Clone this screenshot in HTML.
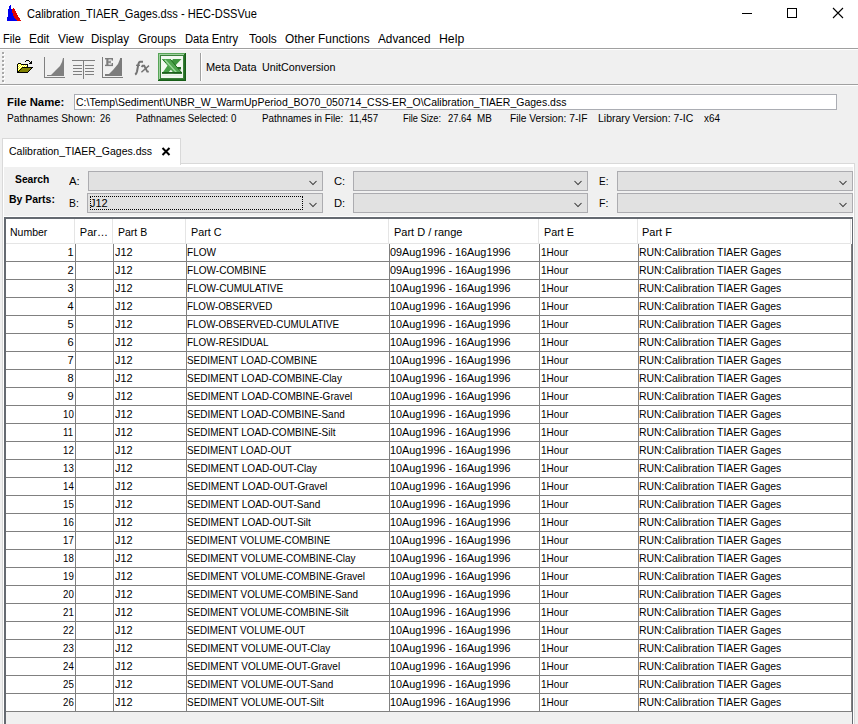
<!DOCTYPE html>
<html><head><meta charset="utf-8">
<style>
html,body{margin:0;padding:0}
body{width:858px;height:724px;overflow:hidden;position:relative;background:#f0f0f0;font-family:"Liberation Sans",sans-serif;color:#000}
.a{position:absolute}
.t{position:absolute;white-space:nowrap;line-height:20px;height:20px;transform-origin:0 0}
.cb{position:absolute;background:#e1e1e1;border:1px solid #acacb0;box-sizing:border-box}
.chev{position:absolute;width:10px;height:6px}
.vl{position:absolute;top:244px;height:468px;width:1px;background:#808080}
.hs{position:absolute;top:219px;height:24px;width:1px;background:#e5e5e5}
.hl{position:absolute;left:6px;width:846px;height:1px;background:#808080}
</style></head><body>
<!-- title + menu -->
<div class="a" style="left:0;top:0;width:858px;height:48px;background:#fff"></div>
<div class="a" style="left:0;top:48px;width:858px;height:1px;background:#a0a0a0"></div>
<div class="a" style="left:0;top:49px;width:858px;height:1px;background:#fff"></div>
<svg class="a" style="left:0;top:0" width="30" height="30" shape-rendering="crispEdges">
  <polygon points="13,8 14,8 15,10 16,12 17,14 18,16 20,19 21,21 12,21 12,10" fill="#e00000"/>
  <polygon points="10,5 11,5 11,8 12,10 12.5,13 13.5,16 15,19 17,21 7,21 7.5,17 8,12 9,6" fill="#0000f0"/>
</svg>
<svg class="a" style="left:730px;top:0" width="128" height="30">
  <rect x="12" y="13" width="10" height="1" fill="#000"/>
  <rect x="57.5" y="8.5" width="9" height="9" fill="none" stroke="#000" stroke-width="1"/>
  <path d="M103,8 L113,18 M113,8 L103,18" stroke="#000" stroke-width="1.1"/>
</svg>
<!-- toolbar -->
<div class="a" style="left:0;top:84px;width:858px;height:1px;background:#a0a0a0"></div>
<div class="a" style="left:0;top:85px;width:858px;height:1px;background:#fff"></div>
<svg class="a" style="left:0;top:50px" width="6" height="34" shape-rendering="crispEdges">
  <g fill="#fff">
  <rect x="3" y="3" width="2" height="2"/><rect x="3" y="7" width="2" height="2"/><rect x="3" y="11" width="2" height="2"/><rect x="3" y="15" width="2" height="2"/>
  <rect x="3" y="19" width="2" height="2"/><rect x="3" y="23" width="2" height="2"/><rect x="3" y="27" width="2" height="2"/><rect x="3" y="31" width="2" height="2"/>
  </g>
  <g fill="#a8a8a8">
  <rect x="2" y="2" width="2" height="2"/><rect x="2" y="6" width="2" height="2"/><rect x="2" y="10" width="2" height="2"/><rect x="2" y="14" width="2" height="2"/>
  <rect x="2" y="18" width="2" height="2"/><rect x="2" y="22" width="2" height="2"/><rect x="2" y="26" width="2" height="2"/><rect x="2" y="30" width="2" height="2"/>
  </g>
</svg>
<!-- folder icon -->
<svg class="a" style="left:0;top:50px" width="40" height="34" shape-rendering="crispEdges">
  <g transform="translate(0,-50)">
  <rect x="22" y="68" width="9" height="1" fill="#808000"/>
  <rect x="21" y="69" width="9" height="1" fill="#808000"/>
  <rect x="20" y="70" width="9" height="1" fill="#808000"/>
  <rect x="19" y="71" width="9" height="1" fill="#808000"/>
  <rect x="18" y="64" width="1" height="1" fill="#ffff00"/>
  <rect x="19" y="64" width="1" height="1" fill="#ffffff"/>
  <rect x="20" y="64" width="1" height="1" fill="#ffff00"/>
  <rect x="18" y="65" width="1" height="1" fill="#ffffff"/>
  <rect x="19" y="65" width="1" height="1" fill="#ffff00"/>
  <rect x="20" y="65" width="1" height="1" fill="#ffffff"/>
  <rect x="21" y="65" width="1" height="1" fill="#ffff00"/>
  <rect x="22" y="65" width="1" height="1" fill="#ffffff"/>
  <rect x="23" y="65" width="1" height="1" fill="#ffff00"/>
  <rect x="24" y="65" width="1" height="1" fill="#ffffff"/>
  <rect x="25" y="65" width="1" height="1" fill="#ffff00"/>
  <rect x="26" y="65" width="1" height="1" fill="#ffffff"/>
  <rect x="18" y="66" width="1" height="1" fill="#ffff00"/>
  <rect x="19" y="66" width="1" height="1" fill="#ffffff"/>
  <rect x="20" y="66" width="1" height="1" fill="#ffff00"/>
  <rect x="21" y="66" width="1" height="1" fill="#ffffff"/>
  <rect x="22" y="66" width="1" height="1" fill="#ffff00"/>
  <rect x="23" y="66" width="1" height="1" fill="#ffffff"/>
  <rect x="24" y="66" width="1" height="1" fill="#ffff00"/>
  <rect x="25" y="66" width="1" height="1" fill="#ffffff"/>
  <rect x="26" y="66" width="1" height="1" fill="#ffff00"/>
  <rect x="18" y="67" width="1" height="1" fill="#ffffff"/>
  <rect x="19" y="67" width="1" height="1" fill="#ffff00"/>
  <rect x="20" y="67" width="1" height="1" fill="#ffffff"/>
  <rect x="21" y="67" width="1" height="1" fill="#ffff00"/>
  <rect x="18" y="68" width="1" height="1" fill="#ffff00"/>
  <rect x="19" y="68" width="1" height="1" fill="#ffffff"/>
  <rect x="20" y="68" width="1" height="1" fill="#ffff00"/>
  <rect x="18" y="69" width="1" height="1" fill="#ffffff"/>
  <rect x="19" y="69" width="1" height="1" fill="#ffff00"/>
  <rect x="18" y="70" width="1" height="1" fill="#ffff00"/>
  <rect x="26" y="60" width="3" height="1" fill="#000"/>
  <rect x="25" y="61" width="1" height="1" fill="#000"/>
  <rect x="29" y="61" width="1" height="1" fill="#000"/>
  <rect x="31" y="61" width="1" height="1" fill="#000"/>
  <rect x="30" y="62" width="2" height="1" fill="#000"/>
  <rect x="18" y="63" width="3" height="1" fill="#000"/>
  <rect x="29" y="63" width="3" height="1" fill="#000"/>
  <rect x="17" y="64" width="1" height="1" fill="#000"/>
  <rect x="21" y="64" width="7" height="1" fill="#000"/>
  <rect x="17" y="65" width="1" height="1" fill="#000"/>
  <rect x="27" y="65" width="1" height="1" fill="#000"/>
  <rect x="17" y="66" width="1" height="1" fill="#000"/>
  <rect x="27" y="66" width="1" height="1" fill="#000"/>
  <rect x="17" y="67" width="1" height="1" fill="#000"/>
  <rect x="22" y="67" width="11" height="1" fill="#000"/>
  <rect x="17" y="68" width="1" height="1" fill="#000"/>
  <rect x="21" y="68" width="1" height="1" fill="#000"/>
  <rect x="31" y="68" width="1" height="1" fill="#000"/>
  <rect x="17" y="69" width="1" height="1" fill="#000"/>
  <rect x="20" y="69" width="1" height="1" fill="#000"/>
  <rect x="30" y="69" width="1" height="1" fill="#000"/>
  <rect x="17" y="70" width="1" height="1" fill="#000"/>
  <rect x="19" y="70" width="1" height="1" fill="#000"/>
  <rect x="29" y="70" width="1" height="1" fill="#000"/>
  <rect x="17" y="71" width="2" height="1" fill="#000"/>
  <rect x="28" y="71" width="1" height="1" fill="#000"/>
  <rect x="17" y="72" width="11" height="1" fill="#000"/>
  </g>
</svg>
<!-- chart icon -->
<svg class="a" style="left:40px;top:50px" width="30" height="34">
  <g transform="translate(-40,-50)">
  <rect x="44" y="57" width="1" height="21" fill="#808080"/>
  <rect x="44" y="77" width="21" height="1" fill="#808080"/>
  <polygon points="47,75 51,75 56,70 60,66 62,62 63,58 64,58 64,76 47,76" fill="#808080"/>
  </g>
</svg>
<!-- list icon -->
<svg class="a" style="left:70px;top:50px" width="30" height="34" shape-rendering="crispEdges">
  <g transform="translate(-70,-50)" fill="#808080">
  <rect x="72" y="60" width="23" height="1"/>
  <rect x="83" y="60" width="1" height="19"/>
  <rect x="73" y="65" width="9" height="1"/><rect x="85" y="65" width="9" height="1"/>
  <rect x="73" y="68" width="9" height="1"/><rect x="85" y="68" width="9" height="1"/>
  <rect x="73" y="71" width="9" height="1"/><rect x="85" y="71" width="9" height="1"/>
  <rect x="73" y="74" width="9" height="1"/><rect x="85" y="74" width="9" height="1"/>
  </g>
</svg>
<!-- E chart icon -->
<svg class="a" style="left:100px;top:50px" width="30" height="34">
  <g transform="translate(-100,-50)" fill="#7c7c7c">
  <rect x="102" y="57" width="1" height="21"/>
  <rect x="102" y="77" width="21" height="1"/>
  <polygon points="105,74 109,74 113,70 118,64 120,59 120,58 122,58 122,76 105,76"/>
  <rect x="105" y="58" width="8" height="1.4"/>
  <rect x="111.6" y="58" width="1.4" height="2.6"/>
  <rect x="106.3" y="58" width="2.2" height="8"/>
  <rect x="107" y="61.4" width="3.2" height="1.3"/>
  <rect x="109.6" y="60.6" width="1.1" height="2.8"/>
  <rect x="105" y="64.7" width="8" height="1.4"/>
  <rect x="111.6" y="63" width="1.4" height="3"/>
  </g>
</svg>
<!-- fx icon -->
<svg class="a" style="left:130px;top:50px" width="26" height="34">
  <g transform="translate(-130,-50)" stroke="#737373" fill="none">
  <path d="M143,61.8 L140,61.8 Q138.8,62.2 138.4,64 L137,71.5 Q136.5,73.6 135.2,74.6" stroke-width="2"/>
  <path d="M136,65.3 L140,65.3" stroke-width="1.3"/>
  <path d="M141.6,67 L142.6,65.8 L144.2,65.8 L147.3,71.6 L148.8,71.6" stroke-width="1.9"/>
  <path d="M149,65.6 L141.4,72.2" stroke-width="1.4"/>
  </g>
</svg>
<!-- excel icon -->
<svg class="a" style="left:156px;top:50px" width="34" height="34">
  <g transform="translate(-156,-50)">
  <rect x="158" y="53" width="28" height="28" fill="#165e16"/>
  <rect x="158" y="53" width="27" height="27" fill="#58a558"/>
  <rect x="159" y="54" width="26" height="26" fill="#246e24"/>
  <rect x="159" y="54" width="25" height="25" fill="#9fd09f"/>
  <rect x="160" y="55" width="24" height="24" fill="#3a7f3a"/>
  <rect x="161" y="56" width="22" height="22" fill="#f2f9f0"/>
  <rect x="162" y="75" width="20" height="1" fill="#e2efe2"/>
  <polygon points="173,59 181.5,59 174.5,66.5 170.5,63" fill="#3d963d"/>
  <polygon points="168,65 172,68.5 167.5,73.5 162,73.5" fill="#45a045"/>
  <polygon points="176,67 181,67 181,69.5 177.5,69.5" fill="#1f6f1f"/>
  <polygon points="162,59 170.5,59 182,73.5 174,73.5" fill="#4fa64f"/>
  <path d="M165,60 L176.5,72.5" stroke="#9edb9e" stroke-width="1.2"/>
  <rect x="162" y="72" width="20" height="1.8" fill="#1b5f1b"/>
  <path d="M170.5,59.5 L181.5,72.5" stroke="#1b6a1b" stroke-width="1"/>
  <path d="M162.5,59.5 L166,63" stroke="#2a7a2a" stroke-width="1"/>
  </g>
</svg>
<div class="a" style="left:200px;top:53px;width:1px;height:28px;background:#a0a0a0"></div>
<div class="a" style="left:201px;top:53px;width:1px;height:28px;background:#fff"></div>

<!-- file name box -->
<div class="a" style="left:74px;top:94px;width:763px;height:16px;background:#fff;border:1px solid #abadb3;box-sizing:border-box"></div>

<!-- tab + panel -->
<div class="a" style="left:2px;top:163px;width:853px;height:570px;background:#fff;border:1px solid #d9d9d9;box-sizing:border-box"></div>
<div class="a" style="left:2px;top:138px;width:179px;height:27px;background:#fff;border:1px solid #d9d9d9;border-bottom:none;box-sizing:border-box"></div>
<svg class="a" style="left:160px;top:146px" width="12" height="12">
  <path d="M2.5,2 L9.5,9 M9.5,2 L2.5,9" stroke="#000" stroke-width="2"/>
</svg>
<div class="a" style="left:4px;top:167px;width:849px;height:49px;background:#f0f0f0"></div>

<!-- combos -->
<div class="cb" style="left:88px;top:171px;width:235px;height:20px"></div>
<div class="cb" style="left:87px;top:193px;width:236px;height:20px"></div>
<div class="cb" style="left:353px;top:171px;width:235px;height:20px"></div>
<div class="cb" style="left:353px;top:193px;width:235px;height:20px"></div>
<div class="cb" style="left:617px;top:171px;width:236px;height:20px"></div>
<div class="cb" style="left:617px;top:193px;width:236px;height:20px"></div>
<div class="a" style="left:90px;top:196px;width:213px;height:14px;box-sizing:border-box;border:1px dotted #000"></div>
<svg class="a" style="left:0;top:0" width="858" height="220">
  <g stroke="#333" stroke-width="1.05" fill="none">
  <path d="M309.5,181 L313,184.5 L316.5,181"/>
  <path d="M309.5,203 L313,206.5 L316.5,203"/>
  <path d="M574.5,181 L578,184.5 L581.5,181"/>
  <path d="M574.5,203 L578,206.5 L581.5,203"/>
  <path d="M839.5,181 L843,184.5 L846.5,181"/>
  <path d="M839.5,203 L843,206.5 L846.5,203"/>
  </g>
</svg>

<!-- table -->
<div class="a" style="left:4px;top:217px;width:849px;height:507px;background:#656a71"></div>
<div class="a" style="left:6px;top:219px;width:846px;height:505px;background:#f0f0f0"></div>
<div class="a" style="left:6px;top:219px;width:846px;height:492px;background:#fff"></div>
<div class="a" style="left:6px;top:243px;width:845px;height:1px;background:#e5e5e5"></div>
<div class="hs" style="left:74px"></div><div class="hs" style="left:112px"></div><div class="hs" style="left:185px"></div>
<div class="hs" style="left:388px"></div><div class="hs" style="left:538px"></div><div class="hs" style="left:637px"></div><div class="hs" style="left:850px"></div>
<div class="vl" style="left:75px"></div><div class="vl" style="left:113px"></div><div class="vl" style="left:186px"></div>
<div class="vl" style="left:389px"></div><div class="vl" style="left:539px"></div><div class="vl" style="left:638px"></div><div class="vl" style="left:851px"></div>
<div class="hl" style="top:261px"></div><div class="hl" style="top:279px"></div><div class="hl" style="top:297px"></div><div class="hl" style="top:315px"></div><div class="hl" style="top:333px"></div><div class="hl" style="top:351px"></div><div class="hl" style="top:369px"></div><div class="hl" style="top:387px"></div><div class="hl" style="top:405px"></div><div class="hl" style="top:423px"></div><div class="hl" style="top:441px"></div><div class="hl" style="top:459px"></div><div class="hl" style="top:477px"></div><div class="hl" style="top:495px"></div><div class="hl" style="top:513px"></div><div class="hl" style="top:531px"></div><div class="hl" style="top:549px"></div><div class="hl" style="top:567px"></div><div class="hl" style="top:585px"></div><div class="hl" style="top:603px"></div><div class="hl" style="top:621px"></div><div class="hl" style="top:639px"></div><div class="hl" style="top:657px"></div><div class="hl" style="top:675px"></div><div class="hl" style="top:693px"></div><div class="hl" style="top:711px"></div>
<div class="t" style="top:4px;font-size:12px;left:27.00px;transform:scaleX(0.9229);">Calibration_TIAER_Gages.dss - HEC-DSSVue</div>
<div class="t" style="top:29px;font-size:12px;left:2.50px;transform:scaleX(0.9206);">File</div>
<div class="t" style="top:29px;font-size:12px;left:28.90px;transform:scaleX(0.9866);">Edit</div>
<div class="t" style="top:29px;font-size:12px;left:57.70px;transform:scaleX(0.9925);">View</div>
<div class="t" style="top:29px;font-size:12px;left:91.00px;transform:scaleX(0.9658);">Display</div>
<div class="t" style="top:29px;font-size:12px;left:138.00px;transform:scaleX(0.9657);">Groups</div>
<div class="t" style="top:29px;font-size:12px;left:185.00px;transform:scaleX(0.9367);">Data Entry</div>
<div class="t" style="top:29px;font-size:12px;left:248.50px;transform:scaleX(0.9924);">Tools</div>
<div class="t" style="top:29px;font-size:12px;left:284.90px;transform:scaleX(0.9921);">Other Functions</div>
<div class="t" style="top:29px;font-size:12px;left:377.80px;transform:scaleX(0.9836);">Advanced</div>
<div class="t" style="top:29px;font-size:12px;left:438.70px;transform:scaleX(1.0211);">Help</div>
<div class="t" style="top:57px;font-size:11px;left:205.90px;">Meta Data</div>
<div class="t" style="top:57px;font-size:11px;left:261.80px;transform:scaleX(0.9761);">UnitConversion</div>
<div class="t" style="top:92px;font-size:11px;font-weight:bold;left:7.00px;transform:scaleX(1.0300);">File Name:</div>
<div class="t" style="top:92px;font-size:11px;left:76.30px;transform:scaleX(0.9534);">C:\Temp\Sediment\UNBR_W_WarmUpPeriod_BO70_050714_CSS-ER_O\Calibration_TIAER_Gages.dss</div>
<div class="t" style="top:109px;font-size:10px;left:6.80px;transform:scaleX(1.0171);">Pathnames Shown:</div>
<div class="t" style="top:109px;font-size:10px;left:100.00px;transform:scaleX(0.9260);">26</div>
<div class="t" style="top:109px;font-size:10px;left:135.90px;transform:scaleX(0.9710);">Pathnames Selected: 0</div>
<div class="t" style="top:109px;font-size:10px;left:261.70px;transform:scaleX(0.9817);">Pathnames in File:</div>
<div class="t" style="top:109px;font-size:10px;left:348.50px;transform:scaleX(0.9751);">11,457</div>
<div class="t" style="top:109px;font-size:10px;left:403.00px;transform:scaleX(0.9265);">File Size:</div>
<div class="t" style="top:109px;font-size:10px;left:447.50px;transform:scaleX(0.9351);">27.64</div>
<div class="t" style="top:109px;font-size:10px;left:476.80px;transform:scaleX(0.9867);">MB</div>
<div class="t" style="top:109px;font-size:10px;left:509.70px;transform:scaleX(1.0241);">File Version: 7-IF</div>
<div class="t" style="top:109px;font-size:10px;left:598.00px;transform:scaleX(1.0445);">Library Version: 7-IC</div>
<div class="t" style="top:109px;font-size:10px;left:703.50px;transform:scaleX(0.9862);">x64</div>
<div class="t" style="top:141px;font-size:11px;left:9.40px;transform:scaleX(0.9546);">Calibration_TIAER_Gages.dss</div>
<div class="t" style="top:169px;font-size:11px;font-weight:bold;left:14.60px;transform:scaleX(0.9376);">Search</div>
<div class="t" style="top:189px;font-size:11px;font-weight:bold;left:9.40px;transform:scaleX(0.9504);">By Parts:</div>
<div class="t" style="top:171px;font-size:11px;left:69.10px;transform:scaleX(1.0392);">A:</div>
<div class="t" style="top:193px;font-size:11px;left:69.10px;transform:scaleX(0.9429);">B:</div>
<div class="t" style="top:171px;font-size:11px;left:334.10px;transform:scaleX(1.0182);">C:</div>
<div class="t" style="top:193px;font-size:11px;left:334.10px;transform:scaleX(1.0182);">D:</div>
<div class="t" style="top:171px;font-size:11px;left:599.40px;transform:scaleX(0.9044);">E:</div>
<div class="t" style="top:193px;font-size:11px;left:599.40px;transform:scaleX(0.9616);">F:</div>
<div class="t" style="top:193px;font-size:11px;left:90.00px;">J12</div>
<div class="t" style="top:222px;font-size:11px;left:10.00px;transform:scaleX(0.9534);">Number</div>
<div class="t" style="top:222px;font-size:11px;left:79.80px;">Par…</div>
<div class="t" style="top:222px;font-size:11px;left:118.00px;transform:scaleX(0.9553);">Part B</div>
<div class="t" style="top:222px;font-size:11px;left:190.80px;transform:scaleX(0.9784);">Part C</div>
<div class="t" style="top:222px;font-size:11px;left:394.00px;">Part D / range</div>
<div class="t" style="top:222px;font-size:11px;left:543.50px;transform:scaleX(0.9815);">Part E</div>
<div class="t" style="top:222px;font-size:11px;left:642.00px;">Part F</div>
<div class="t" style="top:242px;font-size:11px;left:67.48px;">1</div>
<div class="t" style="top:242px;font-size:11px;left:114.50px;transform:scaleX(0.9924);">J12</div>
<div class="t" style="top:242px;font-size:11px;left:187.20px;transform:scaleX(0.9127);">FLOW</div>
<div class="t" style="top:242px;font-size:11px;left:390.10px;transform:scaleX(0.9850);">09Aug1996 - 16Aug1996</div>
<div class="t" style="top:242px;font-size:11px;left:541.30px;transform:scaleX(0.9112);">1Hour</div>
<div class="t" style="top:242px;font-size:11px;left:638.60px;transform:scaleX(0.9476);">RUN:Calibration TIAER Gages</div>
<div class="t" style="top:260px;font-size:11px;left:67.48px;">2</div>
<div class="t" style="top:260px;font-size:11px;left:114.50px;transform:scaleX(0.9924);">J12</div>
<div class="t" style="top:260px;font-size:11px;left:187.20px;transform:scaleX(0.9136);">FLOW-COMBINE</div>
<div class="t" style="top:260px;font-size:11px;left:390.10px;transform:scaleX(0.9850);">09Aug1996 - 16Aug1996</div>
<div class="t" style="top:260px;font-size:11px;left:541.30px;transform:scaleX(0.9112);">1Hour</div>
<div class="t" style="top:260px;font-size:11px;left:638.60px;transform:scaleX(0.9476);">RUN:Calibration TIAER Gages</div>
<div class="t" style="top:278px;font-size:11px;left:67.48px;">3</div>
<div class="t" style="top:278px;font-size:11px;left:114.50px;transform:scaleX(0.9924);">J12</div>
<div class="t" style="top:278px;font-size:11px;left:187.20px;transform:scaleX(0.9124);">FLOW-CUMULATIVE</div>
<div class="t" style="top:278px;font-size:11px;left:390.10px;transform:scaleX(0.9850);">10Aug1996 - 16Aug1996</div>
<div class="t" style="top:278px;font-size:11px;left:541.30px;transform:scaleX(0.9112);">1Hour</div>
<div class="t" style="top:278px;font-size:11px;left:638.60px;transform:scaleX(0.9476);">RUN:Calibration TIAER Gages</div>
<div class="t" style="top:296px;font-size:11px;left:67.48px;">4</div>
<div class="t" style="top:296px;font-size:11px;left:114.50px;transform:scaleX(0.9924);">J12</div>
<div class="t" style="top:296px;font-size:11px;left:187.20px;transform:scaleX(0.8859);">FLOW-OBSERVED</div>
<div class="t" style="top:296px;font-size:11px;left:390.10px;transform:scaleX(0.9850);">10Aug1996 - 16Aug1996</div>
<div class="t" style="top:296px;font-size:11px;left:541.30px;transform:scaleX(0.9112);">1Hour</div>
<div class="t" style="top:296px;font-size:11px;left:638.60px;transform:scaleX(0.9476);">RUN:Calibration TIAER Gages</div>
<div class="t" style="top:314px;font-size:11px;left:67.48px;">5</div>
<div class="t" style="top:314px;font-size:11px;left:114.50px;transform:scaleX(0.9924);">J12</div>
<div class="t" style="top:314px;font-size:11px;left:187.20px;transform:scaleX(0.8952);">FLOW-OBSERVED-CUMULATIVE</div>
<div class="t" style="top:314px;font-size:11px;left:390.10px;transform:scaleX(0.9850);">10Aug1996 - 16Aug1996</div>
<div class="t" style="top:314px;font-size:11px;left:541.30px;transform:scaleX(0.9112);">1Hour</div>
<div class="t" style="top:314px;font-size:11px;left:638.60px;transform:scaleX(0.9476);">RUN:Calibration TIAER Gages</div>
<div class="t" style="top:332px;font-size:11px;left:67.48px;">6</div>
<div class="t" style="top:332px;font-size:11px;left:114.50px;transform:scaleX(0.9924);">J12</div>
<div class="t" style="top:332px;font-size:11px;left:187.20px;transform:scaleX(0.9030);">FLOW-RESIDUAL</div>
<div class="t" style="top:332px;font-size:11px;left:390.10px;transform:scaleX(0.9850);">10Aug1996 - 16Aug1996</div>
<div class="t" style="top:332px;font-size:11px;left:541.30px;transform:scaleX(0.9112);">1Hour</div>
<div class="t" style="top:332px;font-size:11px;left:638.60px;transform:scaleX(0.9476);">RUN:Calibration TIAER Gages</div>
<div class="t" style="top:350px;font-size:11px;left:67.48px;">7</div>
<div class="t" style="top:350px;font-size:11px;left:114.50px;transform:scaleX(0.9924);">J12</div>
<div class="t" style="top:350px;font-size:11px;left:187.20px;transform:scaleX(0.9003);">SEDIMENT LOAD-COMBINE</div>
<div class="t" style="top:350px;font-size:11px;left:390.10px;transform:scaleX(0.9850);">10Aug1996 - 16Aug1996</div>
<div class="t" style="top:350px;font-size:11px;left:541.30px;transform:scaleX(0.9112);">1Hour</div>
<div class="t" style="top:350px;font-size:11px;left:638.60px;transform:scaleX(0.9476);">RUN:Calibration TIAER Gages</div>
<div class="t" style="top:368px;font-size:11px;left:67.48px;">8</div>
<div class="t" style="top:368px;font-size:11px;left:114.50px;transform:scaleX(0.9924);">J12</div>
<div class="t" style="top:368px;font-size:11px;left:187.20px;transform:scaleX(0.9096);">SEDIMENT LOAD-COMBINE-Clay</div>
<div class="t" style="top:368px;font-size:11px;left:390.10px;transform:scaleX(0.9850);">10Aug1996 - 16Aug1996</div>
<div class="t" style="top:368px;font-size:11px;left:541.30px;transform:scaleX(0.9112);">1Hour</div>
<div class="t" style="top:368px;font-size:11px;left:638.60px;transform:scaleX(0.9476);">RUN:Calibration TIAER Gages</div>
<div class="t" style="top:386px;font-size:11px;left:67.48px;">9</div>
<div class="t" style="top:386px;font-size:11px;left:114.50px;transform:scaleX(0.9924);">J12</div>
<div class="t" style="top:386px;font-size:11px;left:187.20px;transform:scaleX(0.9143);">SEDIMENT LOAD-COMBINE-Gravel</div>
<div class="t" style="top:386px;font-size:11px;left:390.10px;transform:scaleX(0.9850);">10Aug1996 - 16Aug1996</div>
<div class="t" style="top:386px;font-size:11px;left:541.30px;transform:scaleX(0.9112);">1Hour</div>
<div class="t" style="top:386px;font-size:11px;left:638.60px;transform:scaleX(0.9476);">RUN:Calibration TIAER Gages</div>
<div class="t" style="top:404px;font-size:11px;left:62.63px;transform:scaleX(0.8800);">10</div>
<div class="t" style="top:404px;font-size:11px;left:114.50px;transform:scaleX(0.9924);">J12</div>
<div class="t" style="top:404px;font-size:11px;left:187.20px;transform:scaleX(0.9064);">SEDIMENT LOAD-COMBINE-Sand</div>
<div class="t" style="top:404px;font-size:11px;left:390.10px;transform:scaleX(0.9850);">10Aug1996 - 16Aug1996</div>
<div class="t" style="top:404px;font-size:11px;left:541.30px;transform:scaleX(0.9112);">1Hour</div>
<div class="t" style="top:404px;font-size:11px;left:638.60px;transform:scaleX(0.9476);">RUN:Calibration TIAER Gages</div>
<div class="t" style="top:422px;font-size:11px;left:63.35px;transform:scaleX(0.8800);">11</div>
<div class="t" style="top:422px;font-size:11px;left:114.50px;transform:scaleX(0.9924);">J12</div>
<div class="t" style="top:422px;font-size:11px;left:187.20px;transform:scaleX(0.9073);">SEDIMENT LOAD-COMBINE-Silt</div>
<div class="t" style="top:422px;font-size:11px;left:390.10px;transform:scaleX(0.9850);">10Aug1996 - 16Aug1996</div>
<div class="t" style="top:422px;font-size:11px;left:541.30px;transform:scaleX(0.9112);">1Hour</div>
<div class="t" style="top:422px;font-size:11px;left:638.60px;transform:scaleX(0.9476);">RUN:Calibration TIAER Gages</div>
<div class="t" style="top:440px;font-size:11px;left:62.63px;transform:scaleX(0.8800);">12</div>
<div class="t" style="top:440px;font-size:11px;left:114.50px;transform:scaleX(0.9924);">J12</div>
<div class="t" style="top:440px;font-size:11px;left:187.20px;transform:scaleX(0.8978);">SEDIMENT LOAD-OUT</div>
<div class="t" style="top:440px;font-size:11px;left:390.10px;transform:scaleX(0.9850);">10Aug1996 - 16Aug1996</div>
<div class="t" style="top:440px;font-size:11px;left:541.30px;transform:scaleX(0.9112);">1Hour</div>
<div class="t" style="top:440px;font-size:11px;left:638.60px;transform:scaleX(0.9476);">RUN:Calibration TIAER Gages</div>
<div class="t" style="top:458px;font-size:11px;left:62.63px;transform:scaleX(0.8800);">13</div>
<div class="t" style="top:458px;font-size:11px;left:114.50px;transform:scaleX(0.9924);">J12</div>
<div class="t" style="top:458px;font-size:11px;left:187.20px;transform:scaleX(0.9168);">SEDIMENT LOAD-OUT-Clay</div>
<div class="t" style="top:458px;font-size:11px;left:390.10px;transform:scaleX(0.9850);">10Aug1996 - 16Aug1996</div>
<div class="t" style="top:458px;font-size:11px;left:541.30px;transform:scaleX(0.9112);">1Hour</div>
<div class="t" style="top:458px;font-size:11px;left:638.60px;transform:scaleX(0.9476);">RUN:Calibration TIAER Gages</div>
<div class="t" style="top:476px;font-size:11px;left:62.63px;transform:scaleX(0.8800);">14</div>
<div class="t" style="top:476px;font-size:11px;left:114.50px;transform:scaleX(0.9924);">J12</div>
<div class="t" style="top:476px;font-size:11px;left:187.20px;transform:scaleX(0.9232);">SEDIMENT LOAD-OUT-Gravel</div>
<div class="t" style="top:476px;font-size:11px;left:390.10px;transform:scaleX(0.9850);">10Aug1996 - 16Aug1996</div>
<div class="t" style="top:476px;font-size:11px;left:541.30px;transform:scaleX(0.9112);">1Hour</div>
<div class="t" style="top:476px;font-size:11px;left:638.60px;transform:scaleX(0.9476);">RUN:Calibration TIAER Gages</div>
<div class="t" style="top:494px;font-size:11px;left:62.63px;transform:scaleX(0.8800);">15</div>
<div class="t" style="top:494px;font-size:11px;left:114.50px;transform:scaleX(0.9924);">J12</div>
<div class="t" style="top:494px;font-size:11px;left:187.20px;transform:scaleX(0.9177);">SEDIMENT LOAD-OUT-Sand</div>
<div class="t" style="top:494px;font-size:11px;left:390.10px;transform:scaleX(0.9850);">10Aug1996 - 16Aug1996</div>
<div class="t" style="top:494px;font-size:11px;left:541.30px;transform:scaleX(0.9112);">1Hour</div>
<div class="t" style="top:494px;font-size:11px;left:638.60px;transform:scaleX(0.9476);">RUN:Calibration TIAER Gages</div>
<div class="t" style="top:512px;font-size:11px;left:62.63px;transform:scaleX(0.8800);">16</div>
<div class="t" style="top:512px;font-size:11px;left:114.50px;transform:scaleX(0.9924);">J12</div>
<div class="t" style="top:512px;font-size:11px;left:187.20px;transform:scaleX(0.9188);">SEDIMENT LOAD-OUT-Silt</div>
<div class="t" style="top:512px;font-size:11px;left:390.10px;transform:scaleX(0.9850);">10Aug1996 - 16Aug1996</div>
<div class="t" style="top:512px;font-size:11px;left:541.30px;transform:scaleX(0.9112);">1Hour</div>
<div class="t" style="top:512px;font-size:11px;left:638.60px;transform:scaleX(0.9476);">RUN:Calibration TIAER Gages</div>
<div class="t" style="top:530px;font-size:11px;left:62.63px;transform:scaleX(0.8800);">17</div>
<div class="t" style="top:530px;font-size:11px;left:114.50px;transform:scaleX(0.9924);">J12</div>
<div class="t" style="top:530px;font-size:11px;left:187.20px;transform:scaleX(0.8888);">SEDIMENT VOLUME-COMBINE</div>
<div class="t" style="top:530px;font-size:11px;left:390.10px;transform:scaleX(0.9850);">10Aug1996 - 16Aug1996</div>
<div class="t" style="top:530px;font-size:11px;left:541.30px;transform:scaleX(0.9112);">1Hour</div>
<div class="t" style="top:530px;font-size:11px;left:638.60px;transform:scaleX(0.9476);">RUN:Calibration TIAER Gages</div>
<div class="t" style="top:548px;font-size:11px;left:62.63px;transform:scaleX(0.8800);">18</div>
<div class="t" style="top:548px;font-size:11px;left:114.50px;transform:scaleX(0.9924);">J12</div>
<div class="t" style="top:548px;font-size:11px;left:187.20px;transform:scaleX(0.9021);">SEDIMENT VOLUME-COMBINE-Clay</div>
<div class="t" style="top:548px;font-size:11px;left:390.10px;transform:scaleX(0.9850);">10Aug1996 - 16Aug1996</div>
<div class="t" style="top:548px;font-size:11px;left:541.30px;transform:scaleX(0.9112);">1Hour</div>
<div class="t" style="top:548px;font-size:11px;left:638.60px;transform:scaleX(0.9476);">RUN:Calibration TIAER Gages</div>
<div class="t" style="top:566px;font-size:11px;left:62.63px;transform:scaleX(0.8800);">19</div>
<div class="t" style="top:566px;font-size:11px;left:114.50px;transform:scaleX(0.9924);">J12</div>
<div class="t" style="top:566px;font-size:11px;left:187.20px;transform:scaleX(0.9027);">SEDIMENT VOLUME-COMBINE-Gravel</div>
<div class="t" style="top:566px;font-size:11px;left:390.10px;transform:scaleX(0.9850);">10Aug1996 - 16Aug1996</div>
<div class="t" style="top:566px;font-size:11px;left:541.30px;transform:scaleX(0.9112);">1Hour</div>
<div class="t" style="top:566px;font-size:11px;left:638.60px;transform:scaleX(0.9476);">RUN:Calibration TIAER Gages</div>
<div class="t" style="top:584px;font-size:11px;left:62.63px;transform:scaleX(0.8800);">20</div>
<div class="t" style="top:584px;font-size:11px;left:114.50px;transform:scaleX(0.9924);">J12</div>
<div class="t" style="top:584px;font-size:11px;left:187.20px;transform:scaleX(0.8977);">SEDIMENT VOLUME-COMBINE-Sand</div>
<div class="t" style="top:584px;font-size:11px;left:390.10px;transform:scaleX(0.9850);">10Aug1996 - 16Aug1996</div>
<div class="t" style="top:584px;font-size:11px;left:541.30px;transform:scaleX(0.9112);">1Hour</div>
<div class="t" style="top:584px;font-size:11px;left:638.60px;transform:scaleX(0.9476);">RUN:Calibration TIAER Gages</div>
<div class="t" style="top:602px;font-size:11px;left:62.63px;transform:scaleX(0.8800);">21</div>
<div class="t" style="top:602px;font-size:11px;left:114.50px;transform:scaleX(0.9924);">J12</div>
<div class="t" style="top:602px;font-size:11px;left:187.20px;transform:scaleX(0.8974);">SEDIMENT VOLUME-COMBINE-Silt</div>
<div class="t" style="top:602px;font-size:11px;left:390.10px;transform:scaleX(0.9850);">10Aug1996 - 16Aug1996</div>
<div class="t" style="top:602px;font-size:11px;left:541.30px;transform:scaleX(0.9112);">1Hour</div>
<div class="t" style="top:602px;font-size:11px;left:638.60px;transform:scaleX(0.9476);">RUN:Calibration TIAER Gages</div>
<div class="t" style="top:620px;font-size:11px;left:62.63px;transform:scaleX(0.8800);">22</div>
<div class="t" style="top:620px;font-size:11px;left:114.50px;transform:scaleX(0.9924);">J12</div>
<div class="t" style="top:620px;font-size:11px;left:187.20px;transform:scaleX(0.8894);">SEDIMENT VOLUME-OUT</div>
<div class="t" style="top:620px;font-size:11px;left:390.10px;transform:scaleX(0.9850);">10Aug1996 - 16Aug1996</div>
<div class="t" style="top:620px;font-size:11px;left:541.30px;transform:scaleX(0.9112);">1Hour</div>
<div class="t" style="top:620px;font-size:11px;left:638.60px;transform:scaleX(0.9476);">RUN:Calibration TIAER Gages</div>
<div class="t" style="top:638px;font-size:11px;left:62.63px;transform:scaleX(0.8800);">23</div>
<div class="t" style="top:638px;font-size:11px;left:114.50px;transform:scaleX(0.9924);">J12</div>
<div class="t" style="top:638px;font-size:11px;left:187.20px;transform:scaleX(0.9059);">SEDIMENT VOLUME-OUT-Clay</div>
<div class="t" style="top:638px;font-size:11px;left:390.10px;transform:scaleX(0.9850);">10Aug1996 - 16Aug1996</div>
<div class="t" style="top:638px;font-size:11px;left:541.30px;transform:scaleX(0.9112);">1Hour</div>
<div class="t" style="top:638px;font-size:11px;left:638.60px;transform:scaleX(0.9476);">RUN:Calibration TIAER Gages</div>
<div class="t" style="top:656px;font-size:11px;left:62.63px;transform:scaleX(0.8800);">24</div>
<div class="t" style="top:656px;font-size:11px;left:114.50px;transform:scaleX(0.9924);">J12</div>
<div class="t" style="top:656px;font-size:11px;left:187.20px;transform:scaleX(0.9088);">SEDIMENT VOLUME-OUT-Gravel</div>
<div class="t" style="top:656px;font-size:11px;left:390.10px;transform:scaleX(0.9850);">10Aug1996 - 16Aug1996</div>
<div class="t" style="top:656px;font-size:11px;left:541.30px;transform:scaleX(0.9112);">1Hour</div>
<div class="t" style="top:656px;font-size:11px;left:638.60px;transform:scaleX(0.9476);">RUN:Calibration TIAER Gages</div>
<div class="t" style="top:674px;font-size:11px;left:62.63px;transform:scaleX(0.8800);">25</div>
<div class="t" style="top:674px;font-size:11px;left:114.50px;transform:scaleX(0.9924);">J12</div>
<div class="t" style="top:674px;font-size:11px;left:187.20px;transform:scaleX(0.9038);">SEDIMENT VOLUME-OUT-Sand</div>
<div class="t" style="top:674px;font-size:11px;left:390.10px;transform:scaleX(0.9850);">10Aug1996 - 16Aug1996</div>
<div class="t" style="top:674px;font-size:11px;left:541.30px;transform:scaleX(0.9112);">1Hour</div>
<div class="t" style="top:674px;font-size:11px;left:638.60px;transform:scaleX(0.9476);">RUN:Calibration TIAER Gages</div>
<div class="t" style="top:692px;font-size:11px;left:62.63px;transform:scaleX(0.8800);">26</div>
<div class="t" style="top:692px;font-size:11px;left:114.50px;transform:scaleX(0.9924);">J12</div>
<div class="t" style="top:692px;font-size:11px;left:187.20px;transform:scaleX(0.9032);">SEDIMENT VOLUME-OUT-Silt</div>
<div class="t" style="top:692px;font-size:11px;left:390.10px;transform:scaleX(0.9850);">10Aug1996 - 16Aug1996</div>
<div class="t" style="top:692px;font-size:11px;left:541.30px;transform:scaleX(0.9112);">1Hour</div>
<div class="t" style="top:692px;font-size:11px;left:638.60px;transform:scaleX(0.9476);">RUN:Calibration TIAER Gages</div>
</body></html>
